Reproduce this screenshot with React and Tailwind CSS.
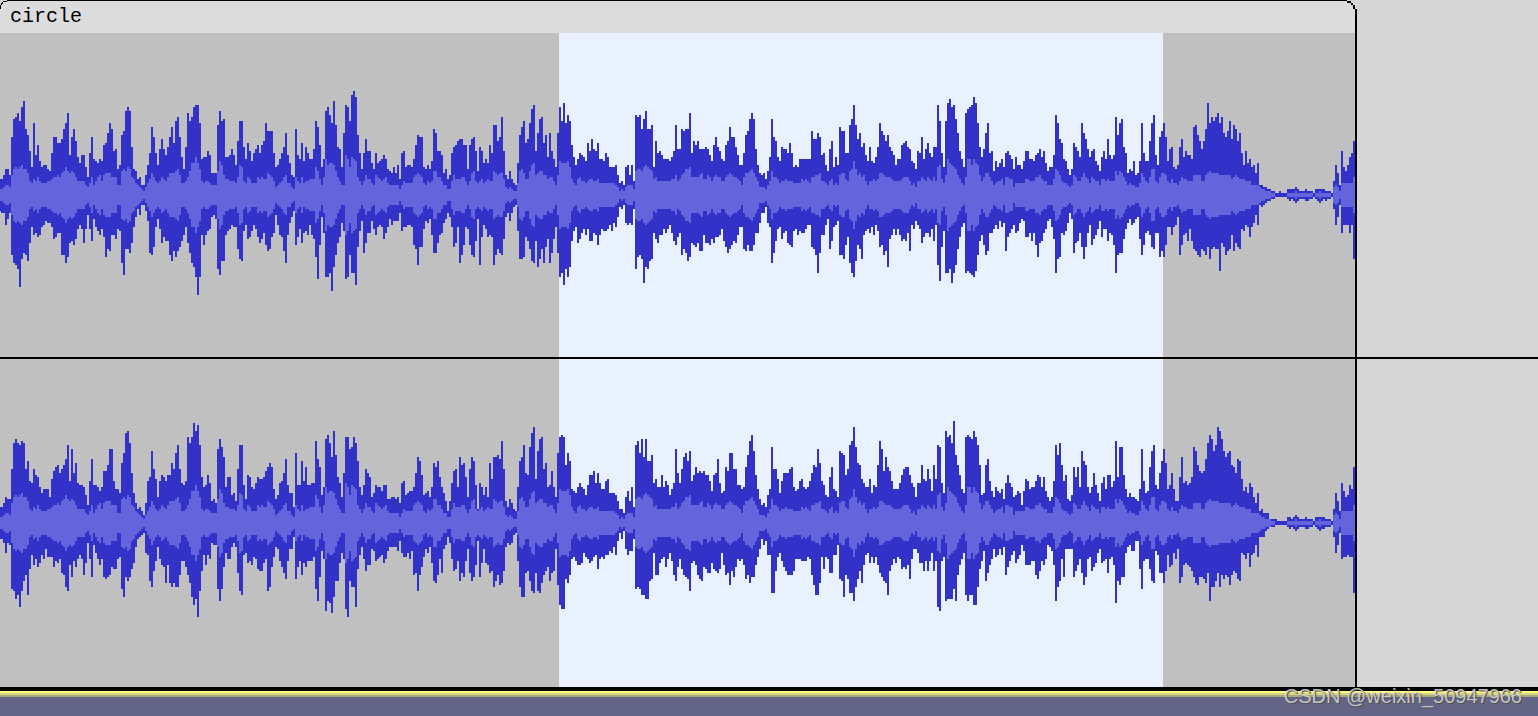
// Every sample column is two pixels wide, every level step is two pixels high
const STEP = 2;
const CLIP_WIDTH = 1355;

const parse = (text) => text.trim().split(/\s+/).map(Number);

const leftPeaks = parse(`
8 8 10 13 13 10 29 38 39 41 37 44 47 33 30 22 14 36 20 25 17 14 15 15 13 12 21 29 29 26
26 28 33 36 41 20 29 33 27 19 16 20 20 14 9 21 29 18 17 16 18 17 25 26 31 36 33 22 23 13
15 30 32 42 44 42 24 13 12 8 9 5 5 10 15 21 34 29 21 15 23 28 23 20 24 29 34 26 37 39
29 19 13 24 41 37 39 44 45 45 36 18 19 19 22 20 11 11 11 35 42 37 38 19 19
20 23 20 15 27 37 37 24 18 26 22 17 21 23 25 21 25 27 36 32 32 32 21 14 15 18 21 24 31 20
16 10 9 33 20 18 26 17 24 21 18 18 23 37 34 25 14 18 42 44 40 36 47 35 24 23 14 31 45 44
37 50 52 49 30 21 13 21 28 22 22 16 13 21 16 17 18 20 18 13 12 11 14 11 15 8 21 22 14 15
15 14 18 25 30 29 29 14 13 15 13 17 33 31 22 22 20 11 13 8 10 21 24 25 27
28 28 25 25 13 25 28 29 22 12 24 22 16 18 16 25 21 35 35 27 29 39 22 10 8 12 8 6 5 16
30 34 37 26 28 36 43 45 22 31 38 39 26 30 19 31 22 18 14 31 44 37 46 36 40 37 25 19 15 18
21 20 19 17 26 22 28 23 22 26 18 18 17 21 19 14 14 14 15 10 6 7 5 14 15 10 15 7 40 39
40 33 38 42 33 33 35 14 27 21 22 20 18 18 18 17 19 22 35 23 23 33 32 33 33
41 21 27 25 27 23 23 23 24 23 20 17 25 29 24 22 18 17 25 27 34 29 29 24 20 15 15 21 30 32
38 41 38 23 15 11 10 11 8 12 19 38 29 27 19 17 24 23 23 21 26 21 14 15 14 18 18 18 18 18
18 32 28 28 31 29 20 21 15 12 23 27 14 19 15 34 32 32 21 21 35 38 45 35 28 31 24 26 20 17
24 17 16 19 24 36 32 30 27 30 24 22 20 15 18 18 25 26 27 24 23 17 16 13 22
21 29 18 23 26 21 19 24 24 45 37 21 14 37 46 48 44 45 38 31 22 18 14 41 43 44 45 49 46 36
24 19 23 31 36 21 22 12 17 14 16 18 14 21 22 20 18 13 19 15 15 13 17 22 22 18 18 17 20 21
23 19 22 16 12 14 14 20 40 36 28 26 18 17 13 10 13 26 24 22 19 36 31 28 23 19 22 23 17 15
12 19 22 18 28 20 18 20 39 30 36 38 24 21 11 13 12 17 10 11
17 36 21 17 17 27 36 40 20 15 29 32 36 29 17 23 24 14 13 15 24 28 19 22 20 20 18 34 35 30
27 23 27 33 46 36 39 37 39 41 36 39 31 29 32 37 28 35 33 27 31 21 15 22 16 18 14 15 11 16
5 5 4 4 3 3 2 2 1 1 2 1 1 1 3 3 3 3 4 3 2 2 2 3 2 2 2 1 3 3
3 3 3 2 2 2 1 7 15 11 5 22 14 12 15 19 21 27
`);

const leftTroughs = parse(`
8 9 9 15 12 9 30 34 35 37 46 32 29 30 33 24 16 20 19 21 20 16 15 13 14 14 16 22 21 19
19 30 30 34 31 24 23 25 22 17 15 17 24 17 10 17 23 12 16 18 20 17 21 31 27 28 20 20 22 17
18 34 40 27 27 29 24 16 11 7 10 5 5 8 13 29 30 26 16 12 17 24 21 23 23 30 33 28 31 28
26 23 20 16 24 29 34 36 41 50 41 20 25 20 18 17 11 10 12 37 40 33 33 20 18
17 15 16 16 27 32 33 18 15 22 21 18 15 17 21 24 22 19 25 28 27 21 19 10 15 20 21 28 34 20
14 11 8 25 21 17 24 19 18 20 15 20 22 31 42 25 11 19 41 41 39 48 36 30 24 21 14 18 42 41
30 39 39 45 26 18 13 29 24 19 19 13 17 20 16 15 16 22 19 16 12 15 13 13 13 9 18 16 16 15
15 16 25 27 35 26 26 17 13 14 12 20 29 29 24 20 19 14 12 9 11 16 26 24 16
34 30 25 16 17 25 30 31 23 12 35 21 15 17 21 20 21 35 30 27 29 30 22 11 9 13 9 6 5 18
32 32 31 21 23 27 33 34 23 36 32 27 34 26 22 34 29 22 16 29 41 39 45 37 41 36 23 18 16 24
22 19 17 20 17 23 23 19 20 25 20 17 18 18 17 15 18 14 16 11 6 7 5 14 15 14 15 7 37 31
30 32 44 36 37 33 32 19 22 24 20 20 17 19 17 15 19 23 25 21 19 30 27 29 33
31 24 25 26 24 28 28 20 24 24 25 22 24 21 21 20 17 23 26 29 27 25 23 24 20 16 16 27 28 25
28 28 25 19 19 14 9 9 6 14 16 34 29 23 17 16 22 19 18 24 25 26 18 17 20 18 19 19 17 15
15 26 27 30 39 29 20 20 15 12 27 23 16 15 13 30 30 32 25 21 34 39 41 33 25 27 32 20 18 17
19 16 20 15 18 26 25 30 28 36 22 20 17 20 17 20 23 22 23 19 28 15 17 13 15
17 24 21 19 19 21 17 23 15 35 43 26 18 39 39 37 44 39 35 27 21 16 14 39 38 39 40 41 38 30
23 20 25 30 28 19 19 17 15 17 13 16 14 28 21 19 17 15 19 18 14 12 13 21 21 19 23 19 25 31
24 23 19 17 13 12 16 22 39 32 31 19 20 18 14 9 12 29 24 23 19 26 32 26 19 15 25 22 20 17
13 21 17 17 23 19 20 25 39 30 29 29 22 17 14 12 15 14 12 11
22 30 25 19 18 20 26 27 19 19 31 28 31 25 16 16 20 16 15 11 30 25 20 19 23 17 23 27 28 30
31 27 28 30 26 32 27 26 27 27 38 24 26 30 28 27 20 28 24 26 27 17 18 15 16 21 16 14 10 15
5 6 5 4 3 3 2 2 1 1 1 1 1 1 2 3 2 3 4 3 2 2 2 3 3 2 2 1 2 3
4 3 2 3 2 2 1 7 15 11 5 19 15 15 15 19 15 32
`);

const rightPeaks = parse(`
8 8 10 13 12 12 27 40 42 40 39 41 40 27 31 21 20 27 24 23 18 15 17 17 17 13 22 26 28 29
25 27 29 32 39 21 37 25 30 20 19 19 18 14 9 21 32 19 19 18 16 18 26 26 29 37 37 21 17 17
15 30 35 45 46 40 25 15 10 7 8 6 4 10 21 23 36 27 22 13 21 24 23 21 24 24 30 27 35 39
27 20 19 21 43 40 43 50 46 49 39 23 18 19 24 20 11 12 10 37 42 38 33 18 23 23 14 15 11 27
39 39 19 12 24 23 18 17 20 23 22 22 23 26 28 30 28 17 12 14 20 21 25 32 19 15 15 8 35 19
19 31 21 28 19 19 20 20 41 32 28 14 18 42 44 40 33 46 34 23 20 13 25 43 43 37 38 43 40 31
18 14 19 27 25 23 13 15 19 18 18 16 19 19 12 12 13 13 12 13
10 20 21 14 15 16 16 18 25 33 31 24 14 15 16 13 18 30 28 31 23 18 15 11 6 11 20 26 27 18
33 29 30 23 13 27 33 31 19 7 20 18 14 18 13 30 22 33 33 34 32 41 27 11 8 12 10 7 6 18
31 33 39 25 24 38 45 48 22 36 42 43 27 30 18 19 26 18 13 35 43 44 43 29 35 31 17 16 15 18
20 18 17 14 19 24 24 26 20 25 20 17 17 21 22 15 15 15 14 11 7 7 5 13 16 11 18 8 39 41
35 42 33 42 31 31 34 20 22 18 18 24 18 21 19 14 17 20 37 25 20 27 33 35 31 36 21 24 28 25
26 25 26 24 24 21 16 24 25 32 20 15 16 28 26 35 35 27 27 19 19 17 18 28 34 41 44 36 24 17
12 9 10 8 14 17 38 27 27 22 15 21 25 25 25 27 28 18 16 17
21 22 18 17 18 21 25 29 28 37 30 21 19 14 13 23 28 17 16 13 36 35 34 24 27 39 41 48 38 30
29 22 20 18 18 22 15 19 18 29 41 37 26 33 28 26 21 17 17 17 20 24 27 28 28 24 20 18 13 20
20 29 22 21 27 22 16 29 22 39 38 20 15 46 43 44 40 51 34 29 24 17 15 43 44 43 42 46 43 39
29 14 15 29 32 21 16 13 18 16 15 17 12 20 24 20 18 13 14 16 15 9 16 22 21 17 18 18 21 24
23 18 23 16 13 11 13 21 39 34 40 29 21 24 12 11 14 28 23 28 18 36 31 29 18 15 18 25 19 15
11 20 23 17 24 24 18 21 41 23 38 38 24 17 13 15 13 13 12 11 17 37 21 15 16 28 36 39 19 17
25 31 37 30 17 19 25 17 11 11 23 33 20 21 19 20 23 38 36 29
26 25 26 32 40 44 42 36 39 48 46 42 36 33 35 36 29 28 25 32 31 22 16 18 15 20 18 13 10 15
6 7 5 5 5 2 2 2 2 1 1 1 1 1 3 3 2 3 4 3 2 2 2 3 2 2 2 1 3 3
3 3 3 2 2 2 1 7 15 11 6 20 16 13 14 19 17 28
`);

const rightTroughs = parse(`
8 8 10 15 10 11 33 34 38 36 42 34 29 26 36 23 16 21 18 22 20 16 18 13 17 17 17 22 19 20
18 25 26 32 34 21 27 19 22 18 16 18 26 20 10 18 27 11 15 18 21 18 27 28 27 26 22 23 23 18
17 33 37 27 29 27 23 20 12 8 7 6 5 15 16 29 32 24 19 12 18 21 22 30 21 30 32 30 32 32
26 19 19 22 26 30 37 41 38 47 34 24 16 21 16 18 10 11 11 33 39 33 22 15 18 18 12 10 12 25
34 36 16 15 20 19 21 17 18 23 24 24 20 18 34 32 22 17 12 13 19 22 25 28 19 13 13 7 28 22
19 26 20 22 19 19 19 17 33 39 27 14 18 44 39 40 45 37 29 29 20 15 18 43 47 29 32 32 42 23
16 12 18 24 21 21 13 14 19 18 17 16 20 18 14 12 12 12 12 14
9 15 17 17 15 18 14 26 25 34 26 22 17 13 15 12 20 29 30 26 18 25 13 11 7 10 18 24 23 19
29 25 27 19 13 25 29 27 21 9 27 20 13 20 21 25 24 32 29 26 31 30 24 12 10 11 10 6 5 19
32 37 37 25 24 29 34 35 25 34 35 30 26 24 22 29 25 24 13 31 41 43 43 28 30 26 18 17 19 21
21 20 15 17 18 20 19 17 16 23 18 17 18 16 16 14 15 12 16 9 5 8 4 13 16 14 14 8 33 32
33 36 36 38 38 29 28 15 26 26 20 18 17 22 18 15 19 26 29 22 18 23 26 27 28 34 20 19 21 26
28 29 22 23 25 25 20 23 24 25 23 15 21 26 25 31 24 27 22 18 19 18 21 28 26 30 27 27 21 17
13 8 11 9 16 16 35 35 24 17 15 19 22 24 26 26 26 24 18 18
18 19 19 19 17 18 26 31 36 36 30 17 23 17 18 25 25 16 16 11 28 29 37 26 28 35 35 39 32 28
24 30 21 16 15 20 17 20 17 21 25 27 29 30 36 24 21 18 20 17 18 23 22 23 21 28 18 13 13 15
20 20 24 19 24 19 15 24 19 42 44 19 17 39 38 38 38 33 39 26 21 18 15 36 39 36 36 41 41 32
23 19 14 29 25 21 18 13 17 16 13 16 12 26 22 19 16 14 20 18 16 11 14 21 21 21 19 19 26 28
24 19 21 18 11 12 14 21 39 32 29 18 27 13 13 13 13 27 24 21 18 25 31 27 18 17 24 22 20 15
13 20 19 18 25 18 17 21 40 29 31 27 27 15 12 11 14 14 9 9 23 33 19 18 18 23 29 30 14 16
25 25 30 24 16 22 21 15 18 13 30 27 21 20 21 22 24 27 30 31
27 27 28 30 25 39 32 32 29 25 32 26 28 26 27 31 26 24 25 28 29 15 16 18 15 22 16 15 11 17
7 7 7 4 3 2 2 2 1 1 1 1 1 1 2 3 2 3 4 3 2 2 2 3 3 2 2 1 2 3
4 3 3 2 2 2 1 7 15 11 5 18 17 17 16 17 17 35
`);

// Average level, drawn lighter and mirrored around the centre line
const average = parse(`
3 3 4 5 5 4 10 13 14 13 14 15 13 13 11 7 6 8 7 9 7 6 6 6 7 7 8 9 9 10
9 11 12 14 12 11 12 11 9 7 7 7 7 5 4 6 9 5 7 9 10 7 10 11 11 11 9 9 9 5
5 12 13 12 14 13 9 8 6 5 4 3 2 4 6 8 11 9 7 6 7 9 8 7 9 11 11 11 12 13
10 6 6 7 9 12 16 16 19 16 13 7 6 7 7 6 5 5 5 12 17 15 10 8 8
7 7 7 6 9 15 14 7 6 9 8 6 6 6 9 8 9 8 8 11 10 9 7 4 5 6 7 9 10 6
6 4 3 9 7 6 9 6 7 7 8 8 8 14 12 8 5 9 18 15 16 16 15 12 9 7 5 5 20 18
14 19 18 17 9 7 5 7 10 8 8 6 5 10 9 8 7 8 9 6 5 5 5 5 5 3 5 7 6 6
6 6 9 10 11 10 9 6 5 7 6 7 12 12 9 9 7 5 5 3 3 7 10 8 8
8 9 9 7 5 7 11 12 7 6 7 8 6 7 8 7 7 12 11 10 11 11 8 4 3 4 3 2 2 6
12 13 11 8 8 12 15 16 10 11 12 12 10 10 8 9 9 7 5 10 17 16 16 16 17 14 8 6 5 8
9 7 7 6 7 8 8 7 7 8 6 6 6 6 6 6 6 6 5 4 2 3 2 4 5 5 5 3 12 13
13 12 14 15 14 13 12 8 9 7 7 7 7 7 7 7 8 8 10 7 8 10 11 13 13
14 9 9 9 9 10 11 8 8 10 9 7 9 10 9 9 7 7 9 10 11 10 9 9 8 7 5 9 11 11
12 13 11 9 7 4 4 4 3 5 7 12 9 9 8 6 7 7 8 7 7 7 6 6 6 6 8 7 8 7
6 9 9 10 10 11 7 7 6 5 7 8 5 6 5 10 11 11 8 7 12 13 17 13 10 11 9 10 7 5
7 7 8 7 8 11 11 10 9 9 9 8 7 7 7 7 8 9 9 9 7 5 6 4 7
7 9 8 7 9 8 7 9 7 14 15 8 6 10 18 16 15 14 13 10 8 6 5 9 18 18 15 18 16 15
10 7 9 11 11 9 7 5 6 7 7 8 5 9 9 8 8 4 6 6 6 6 6 8 8 7 7 7 9 9
10 8 7 7 5 5 5 8 13 12 10 7 6 6 5 4 5 10 9 7 7 9 11 9 8 6 9 8 7 7
5 8 8 7 8 7 7 7 12 10 12 11 9 7 5 6 5 5 4 4
6 11 9 7 6 9 13 13 7 6 9 11 11 10 7 6 8 6 6 5 7 9 8 8 7 7 7 10 10 10
10 7 7 10 11 12 11 11 11 11 10 10 10 10 10 10 8 9 10 9 8 8 8 7 7 7 5 5 5 5
4 3 3 2 2 2 1 1 0 0 0 0 0 0 1 1 1 1 2 1 1 1 1 1 1 1 1 0 1 1
2 1 1 1 1 1 0 4 5 4 2 6 6 6 6 6 6 9
`);

const channels = [
  { name: 'Left channel', peaks: leftPeaks, troughs: leftTroughs, height: 324, size: 'h-[324px]' },
  { name: 'Right channel', peaks: rightPeaks, troughs: rightTroughs, height: 328, size: 'h-[328px]' },
];

const selection = { start: 559, end: 1163 };

const percent = (value) => `${(value / CLIP_WIDTH) * 100}%`;

// One closed bar per column, the first one starts half outside the clip
const envelope = (up, down) =>
  up
    .map((level, i) => {
      const x = i * STEP - 1;
      const top = -level * STEP;
      const bottom = (down[i] ?? 0) * STEP;
      return `M${x} ${top}h${STEP}V${bottom}h-${STEP}z`;
    })
    .join('');

const Channel = ({ channel }) => (
  <div className={`flex ${channel.size}`}>
    <div className="relative min-w-0 flex-1 border-r-2 border-black bg-[#c0c0c0]">
      <div
        className="absolute inset-y-0 bg-[#e9f1ff]"
        style={{ left: percent(selection.start), width: percent(selection.end - selection.start) }}
      />
      <svg
        role="img"
        aria-label={channel.name}
        className="relative block h-full w-full"
        viewBox={`0 ${-channel.height / 2} ${CLIP_WIDTH} ${channel.height}`}
        preserveAspectRatio="none"
        shapeRendering="crispEdges"
      >
        <path fill="#3232c8" d={envelope(channel.peaks, channel.troughs)} />
        <path fill="#6464dc" d={envelope(average, average)} />
      </svg>
    </div>
    <div className="w-[181px] shrink-0" />
  </div>
);

const ClipHeader = () => (
  <div className="flex h-[33px]">
    <div className="flex min-w-0 flex-1 bg-[#dcdcdc]">
      <svg className="h-[33px] w-2 shrink-0" viewBox="0 0 8 33" shapeRendering="crispEdges">
        <path fill="#d6d6d6" d="M0 0h8v1H3v2H1v2H0z" />
        <path d="M7 0h1v1H7zM3 1h4v1H3zM2 2h1v1H2zM1 3h2v1H1zM1 4h1v1H1zM0 5h1v4H0z" />
      </svg>
      <div className="min-w-0 flex-1 border-t border-black pl-0.5 pt-1 font-['Liberation_Mono',monospace] text-[20px] leading-6 text-black">
        circle
      </div>
      <svg className="h-[33px] w-[10px] shrink-0" viewBox="0 0 10 33" shapeRendering="crispEdges">
        <path fill="#d6d6d6" d="M0 0h10v9H8V5H6V3H4V1H0z" />
        <path d="M0 1h4v2H0zM4 3h2v2H4zM6 5h2v4H6zM8 9h2v24H8z" />
      </svg>
    </div>
    <div className="w-[181px] shrink-0" />
  </div>
);

export default function App() {
  return (
    <main className="relative flex min-h-screen flex-col overflow-hidden bg-[#d6d6d6]">
      <ClipHeader />
      <Channel channel={channels[0]} />
      <div className="h-0.5 bg-black" />
      <Channel channel={channels[1]} />
      <div className="h-1 bg-black" />
      <div className="h-0.5 bg-[#ffff80]" />
      <div className="h-0.5 bg-[#d6d680]" />
      <div className="h-0.5 bg-[#a8a880]" />
      <div className="flex-1 bg-[#646486]" />
      <p className="absolute bottom-2 right-4 font-['Liberation_Sans',sans-serif] text-[20px] leading-6 text-[#d2d2d2]/90 [text-shadow:1px_1px_1px_#505050]">
        CSDN @weixin_50947966
      </p>
    </main>
  );
}
